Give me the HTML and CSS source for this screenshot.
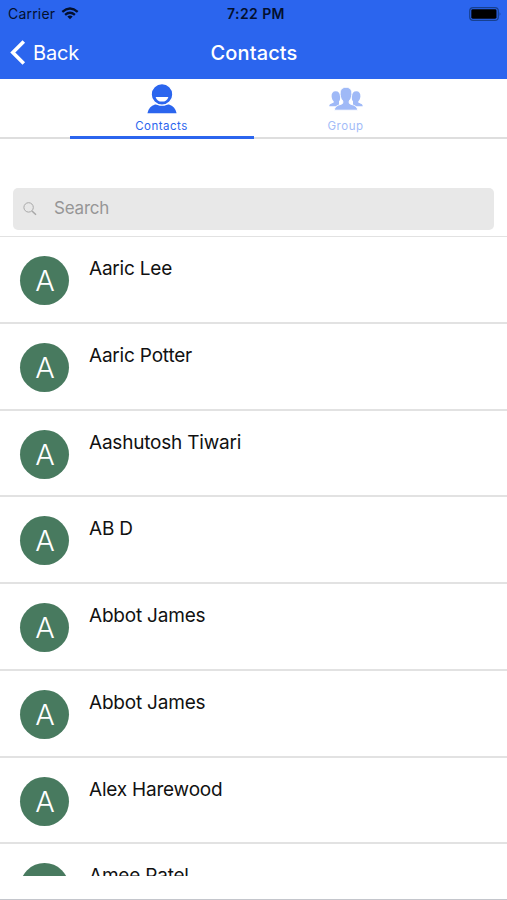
FILE: index.html
```html
<!DOCTYPE html>
<html lang="en">
<head>
    <meta charset="UTF-8">
    <meta name="viewport" content="width=device-width, initial-scale=1.0">
    <title>Contacts</title>
    <link rel="stylesheet" href="styles.css">
</head>
<body>
    <header class="header">
        <div class="status">
            <div class="carrier">
                <span>Carrier</span>
                <svg class="wifi" width="18" height="13" viewBox="0 0 18 13" fill="none" stroke="#03102e" stroke-width="2.3">
                    <path d="M1.3 4.9 Q9 -1.9 16.7 4.9"/>
                    <path d="M4.1 7.8 Q9 3.6 13.9 7.8"/>
                    <path d="M9 12.2 L6.3 9.6 Q9 7.4 11.7 9.6 Z" fill="#03102e" stroke="none"/>
                </svg>
            </div>
            <span class="time">7:22 PM</span>
            <svg class="battery" width="33" height="14" viewBox="0 0 33 14">
                <rect x="0.7" y="0.7" width="28.6" height="12.6" rx="3.4" fill="none" stroke="#17408f" stroke-width="1.2"/>
                <rect x="2.3" y="2.3" width="25.2" height="9.4" rx="1.4" fill="#000"/>
                <path d="M30.6 5 Q32.4 7 30.6 9 Z" fill="#17408f"/>
            </svg>
        </div>
        <nav class="navbar">
            <a class="back">
                <svg width="16" height="25" viewBox="0 0 16 25" fill="none" stroke="#fff" stroke-width="3.6">
                    <path d="M13.8 1.5 L2.8 12.5 L13.8 23.5"/>
                </svg>
                <span>Back</span>
            </a>
            <h1 class="title">Contacts</h1>
        </nav>
    </header>

    <div class="tabs">
        <div class="tab active">
            <svg width="30" height="31" viewBox="0 0 30 31">
                <path d="M0.4 29.2 Q2 22.4 8 20.6 H22 Q28 22.4 29.6 29.2 Z" fill="#2b65ee"/>
                <circle cx="15" cy="10.4" r="10.8" fill="#2b65ee" stroke="#fff" stroke-width="1.2"/>
                <path d="M8.6 12.9 H21.4 Q20 17.6 15 17.6 Q10 17.6 8.6 12.9 Z" fill="#fff"/>
            </svg>
            <span class="tab-label">Contacts</span>
        </div>
        <div class="tab">
            <svg width="34" height="31" viewBox="0 0 34 31" fill="#9fb9f7">
                <path d="M6.6 7.2 C3.9 7.2 2.4 9.2 2.6 12.6 C2.8 15 3.7 16.4 4.7 17.3 V18.4 C4.2 19.4 0.2 19.2 0.2 22.3 H10 V17.3 C11 16.4 11.2 15 11.2 12.6 C11.2 9.2 9.5 7.2 6.6 7.2 Z"/>
                <path d="M27.4 7.2 C30.1 7.2 31.6 9.2 31.4 12.6 C31.2 15 30.3 16.4 29.3 17.3 V18.4 C29.8 19.4 33.8 19.2 33.8 22.3 H24 V17.3 C23 16.4 22.8 15 22.8 12.6 C22.8 9.2 24.5 7.2 27.4 7.2 Z"/>
                <path d="M17 3.3 C12.8 3.3 10.8 6.2 11.2 10.6 C11.4 13.8 12.6 15.8 13.8 17 V19.2 C13 21 5.6 20.4 5.4 26.2 H28.6 C28.4 20.4 21 21 20.2 19.2 V17 C21.4 15.8 22.6 13.8 22.8 10.6 C23.2 6.2 21.2 3.3 17 3.3 Z" stroke="#fff" stroke-width="0.9"/>
            </svg>
            <span class="tab-label">Group</span>
        </div>
    </div>

    <div class="search">
        <svg width="15" height="15" viewBox="0 0 15 15" fill="none" stroke="#a8a8a8">
            <circle cx="5.6" cy="5.4" r="4.7"/>
            <path d="M9 9 L13 12.8" stroke-width="1.5"/>
        </svg>
        <span class="placeholder">Search</span>
    </div>

    <div class="list">
        <div class="row"><div class="avatar">A</div><span class="name">Aaric Lee</span></div>
        <div class="row"><div class="avatar">A</div><span class="name">Aaric Potter</span></div>
        <div class="row"><div class="avatar">A</div><span class="name">Aashutosh Tiwari</span></div>
        <div class="row"><div class="avatar">A</div><span class="name">AB D</span></div>
        <div class="row"><div class="avatar">A</div><span class="name">Abbot James</span></div>
        <div class="row"><div class="avatar">A</div><span class="name">Abbot James</span></div>
        <div class="row"><div class="avatar">A</div><span class="name">Alex Harewood</span></div>
        <div class="row"><div class="avatar">A</div><span class="name">Amee Patel</span></div>
    </div>
    <div class="footer"></div>
</body>
</html>
```
FILE: styles.css
```css
* {
    box-sizing: border-box;
}
body {
    margin: 0;
    height: 900px;
    overflow: hidden;
    background-color: #fff;
    font-family: Inter, "Liberation Sans", sans-serif;
    color: #111;
}
svg {
    display: block;
    flex: none;
}
.header {
    height: 79px;
    background-color: #2b65ee;
}
.status {
    display: grid;
    grid-template-columns: 1fr auto 1fr;
    align-items: center;
    height: 27px;
    padding: 0 5px 0 8px;
    color: #03102e;
    font-size: 14px;
}
.carrier {
    display: flex;
    align-items: center;
    gap: 6px;
    letter-spacing: 0.2px;
}
.time {
    padding-left: 2px;
    font-weight: 600;
    font-size: 14px;
    letter-spacing: 0.4px;
}
.battery {
    justify-self: end;
}
.navbar {
    display: grid;
    grid-template-columns: 1fr auto 1fr;
    align-items: center;
    height: 51px;
    padding: 0 10px;
    color: #fff;
}
.back {
    display: flex;
    align-items: center;
    gap: 7px;
    font-size: 20px;
    letter-spacing: -0.2px;
}
.title {
    margin: 0;
    padding-left: 1px;
    font-size: 20px;
    font-weight: 500;
    letter-spacing: 0.1px;
}
.tabs {
    display: flex;
    justify-content: center;
    height: 60px;
    border-bottom: 2px solid #dedede;
}
.tab {
    display: flex;
    flex-direction: column;
    align-items: center;
    width: 184px;
    height: 60px;
    padding-top: 5px;
    color: #a3bcf8;
}
.tab.active {
    color: #2b65ee;
    border-bottom: 3px solid #2b65ee;
}
.tab-label {
    margin-top: 4px;
    font-size: 11.5px;
    line-height: 14px;
    letter-spacing: 0.5px;
}
.search {
    display: flex;
    align-items: center;
    gap: 16px;
    height: 42px;
    margin: 49px 13px 6px;
    padding: 0 10px;
    border-radius: 5px;
    background-color: #e8e8e8;
    color: #969696;
    font-size: 17px;
    letter-spacing: -0.2px;
}
.placeholder {
    padding-bottom: 2px;
}
.list {
    height: 640px;
    overflow: hidden;
    border-top: 1px solid #e2e2e2;
}
.row {
    display: flex;
    height: 86.75px;
    padding: 19px 20.4px 0;
    border-bottom: 2px solid #e2e2e2;
}
.avatar {
    flex: none;
    width: 49px;
    height: 49px;
    border-radius: 50%;
    background-color: #487a5f;
    color: #fff;
    font-size: 29px;
    font-weight: 300;
    line-height: 50px;
    text-align: center;
}
.name {
    margin-left: 19.6px;
    font-size: 19px;
    line-height: 25px;
    letter-spacing: -0.2px;
}
.footer {
    height: 24px;
    border-bottom: 1px solid #c4c6cc;
}
```
